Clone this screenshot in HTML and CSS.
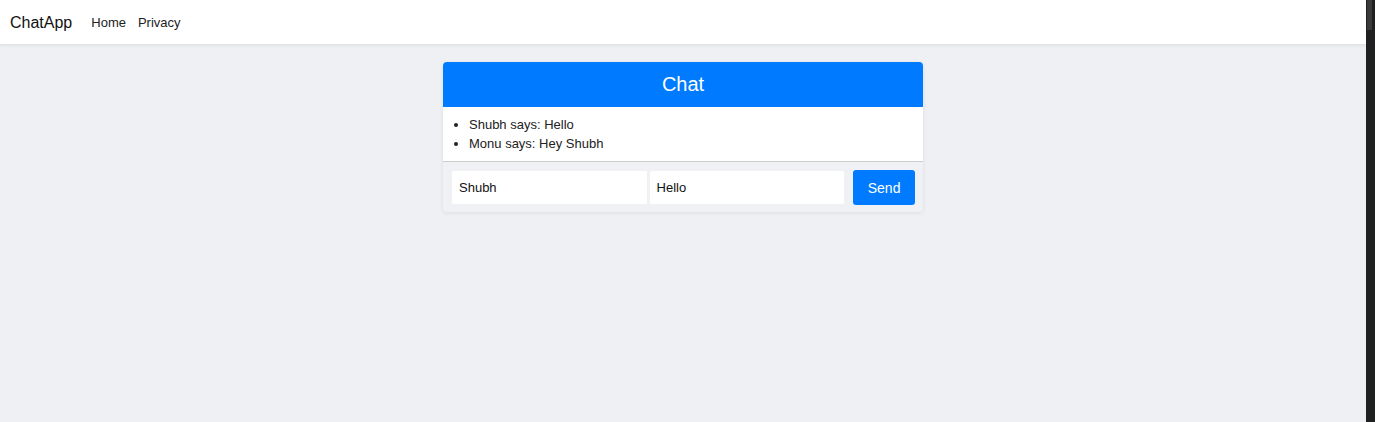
FILE: index.html
```html
<!DOCTYPE html>
<html>
<head>
<meta charset="utf-8">
<link rel="stylesheet" href="styles.css">
</head>
<body>
<div class="page">
  <nav class="navbar">
    <a class="brand">ChatApp</a>
    <a class="nav-link">Home</a>
    <a class="nav-link">Privacy</a>
  </nav>
  <main class="main">
    <section class="card">
      <header class="card-header">Chat</header>
      <ul class="messages">
        <li>Shubh says: Hello</li>
        <li>Monu says: Hey Shubh</li>
      </ul>
      <form class="composer">
        <input class="field" type="text" value="Shubh">
        <input class="field" type="text" value="Hello">
        <button class="send" type="button">Send</button>
      </form>
    </section>
  </main>
</div>
<div class="scrollbar"><div class="thumb"></div></div>
</body>
</html>
```
FILE: styles.css
```css
html, body { margin: 0; height: 100%; }
body {
  display: flex;
  font-family: "Liberation Sans", Arial, sans-serif;
  background: #eff0f4;
  overflow: hidden;
}
.page { flex: 1; display: flex; flex-direction: column; }
.navbar {
  height: 45px;
  background: #fff;
  display: flex;
  align-items: center;
  padding: 1px 10px 0;
  box-shadow: 0 1px 3px rgba(0,0,0,0.06);
  border-bottom: 1px solid #e4e5e9;
  box-sizing: border-box;
}
.brand { font-size: 16px; color: #111; margin-right: 19px; }
.nav-link { font-size: 13px; color: #222; margin-right: 12px; }
.main { display: flex; justify-content: center; padding-top: 17px; }
.card {
  width: 480px;
  border-radius: 4px;
  background: #f0f1f4;
  box-shadow: 0 1px 4px rgba(0,0,0,0.08);
  overflow: hidden;
}
.card-header {
  height: 45px;
  background: #007bff;
  color: #fff;
  font-size: 20px;
  display: flex;
  align-items: center;
  justify-content: center;
}
.messages {
  margin: 0;
  background: #fff;
  padding: 8px 0 8px 26px;
  font-size: 13px;
  line-height: 19px;
  color: #222;
  border-bottom: 1px solid #ccc;
  height: 55px;
  box-sizing: border-box;
}
.composer {
  display: flex;
  padding: 8px 8px 7px 8px;
  margin: 0;
}
.field {
  width: 197px;
  height: 35px;
  box-sizing: border-box;
  border: 1px solid #f1f1f3;
  border-radius: 3px;
  background: #fff;
  padding: 0 7px;
  font-family: inherit;
  font-size: 13px;
  color: #111;
  margin: 0 1px 0 0;
  outline: none;
}
.field + .field { margin-right: 8px; }
.send {
  width: 62px;
  height: 35px;
  background: #007bff;
  color: #fff;
  border: 0;
  border-radius: 3px;
  font-family: inherit;
  font-size: 14px;
  font-weight: normal;
  padding: 0;
}
.scrollbar { width: 9px; background: #202020; flex: none; }
.thumb { margin-left: 1px; width: 5px; height: 30px; background: #3a3a3a; }
```
